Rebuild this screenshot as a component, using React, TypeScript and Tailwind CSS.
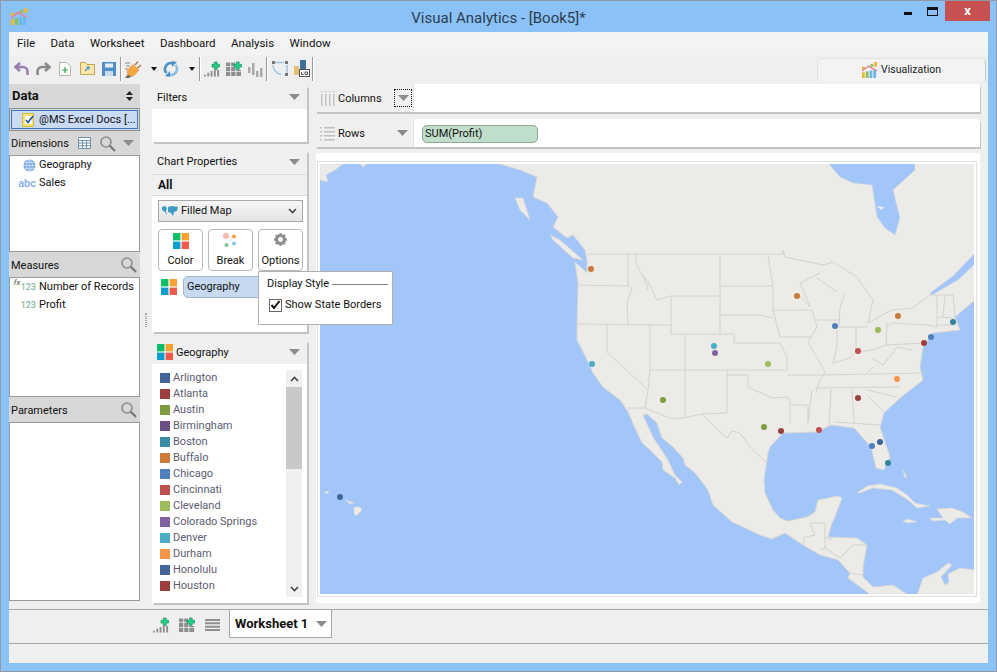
import type { ReactNode } from 'react';

const FONT = "font-['Roboto','Noto_Sans',sans-serif]";

const MENU_ITEMS = ['File', 'Data', 'Worksheet', 'Dashboard', 'Analysis', 'Window'];

const LEGEND: { name: string; color: string }[] = [
  { name: 'Arlington', color: 'bg-[#3f6599]' },
  { name: 'Atlanta', color: 'bg-[#9c3e3b]' },
  { name: 'Austin', color: 'bg-[#7f9c3f]' },
  { name: 'Birmingham', color: 'bg-[#6a5087]' },
  { name: 'Boston', color: 'bg-[#3a8ea5]' },
  { name: 'Buffalo', color: 'bg-[#cc7a36]' },
  { name: 'Chicago', color: 'bg-[#4f81bd]' },
  { name: 'Cincinnati', color: 'bg-[#c0504d]' },
  { name: 'Cleveland', color: 'bg-[#9bbb59]' },
  { name: 'Colorado Springs', color: 'bg-[#8064a2]' },
  { name: 'Denver', color: 'bg-[#4bacc6]' },
  { name: 'Durham', color: 'bg-[#f79646]' },
  { name: 'Honolulu', color: 'bg-[#3f6599]' },
  { name: 'Houston', color: 'bg-[#9c3e3b]' },
];

const LAND =
  '500,164 520,170 537,177 533,197 547,203 558,217 553,227 567,238 573,235 585,250 587,260 587,273 575,262 578,283 577,323 577,340 587,360 593,373 603,387 620,400 628,412 635,428 642,443 650,450 662,462 663,470 675,478 679,485 682,482 675,475 668,460 653,437 643,415 647,414 657,423 662,438 673,447 683,458 685,465 695,473 708,490 712,502 713,505 732,522 760,535 772,539 785,533 803,545 820,555 838,560 850,573 848,578 867,592 870,595 908,595 893,585 873,587 863,577 863,567 867,545 857,538 828,537 832,523 835,517 842,498 838,496 818,500 815,512 807,517 788,521 780,518 773,510 765,493 764,480 768,453 770,447 783,433 817,432 831,425 854,428 871,447 876,468 884,470 890,457 880,427 884,413 900,398 923,380 920,367 923,347 933,333 960,330 955,317 975,300 975,163 500,163';

const ISLANDS = [
  '917,595 923,578 937,572 948,563 952,565 941,577 945,585 949,582 948,574 960,568 975,570 975,595',
  '857,493 867,486 880,484 897,488 907,495 915,503 930,506 917,508 908,500 892,490 873,488 860,493',
  '930,518 943,518 937,509 952,508 963,512 972,518 957,518 950,524 945,520 932,521',
  '903,521 908,519 917,522 907,523',
  '354,507 360,507 362,510 356,516 354,513',
  '345,500 354,503 350,504',
  '324,492 329,491 327,494',
  '550,235 560,240 583,260 573,258 553,240',
  '515,198 523,198 530,220 520,210',
  '320,164 343,164 335,170 326,175 328,182 320,180',
  '903,470 907,477 905,478',
  '360,164 367,164 363,167',
];

const BORDERS = [
  '587,254 783,254 783,250 785,257 823,265 833,262 857,277 873,300 868,323 892,310 913,308 930,295 953,295 955,317',
  '578,285 630,286',
  '628,254 628,287',
  '632,287 627,303 628,324',
  '577,324 671,325',
  '607,325 607,352 648,390 645,408',
  '627,408 645,408 672,419 683,418 702,414 715,427 727,438 732,431 740,433 750,447 766,462',
  '636,254 636,264 645,280 648,290',
  '640,272 647,280 657,300 670,296 720,296',
  '671,296 671,334 734,334 734,343 780,343 787,357 787,370 650,370 650,325',
  '720,255 720,334',
  '720,286 772,286',
  '720,315 760,315 773,318',
  '768,255 773,287 773,310 780,337 812,337',
  '685,334 685,418',
  '727,370 727,413 702,414',
  '727,375 748,375 748,387 772,398 788,397 790,402 790,423',
  '648,390 650,370',
  '787,375 820,375 925,373',
  '790,405 808,405 808,423',
  '812,390 808,423',
  '831,390 829,425',
  '852,390 854,423',
  '835,422 880,425',
  '867,395 884,412',
  '867,390 897,397',
  '815,388 900,387',
  '773,310 812,310 817,327 808,342 820,363 825,372 820,380 816,393',
  '797,293 810,307 800,283 820,273',
  '817,320 840,320',
  '817,278 837,292',
  '845,293 840,307 839,327',
  '837,327 868,327',
  '837,327 837,347 833,363 850,358 856,352 872,350 886,345',
  '856,328 856,352',
  '887,322 886,345',
  '873,367 867,373',
  '872,358 883,365 897,347 912,350',
  '886,345 925,343',
  '887,327 892,323 928,325 937,327 937,295',
  '945,295 943,317',
  '937,317 955,318',
  '937,325 955,325',
  '810,523 825,523 825,537 832,540',
  '810,523 815,535 805,537 803,545',
  '825,537 825,548 820,550',
  '825,548 840,558 853,545 867,545',
  '850,573 863,575',
];

const DOTS = [
  { x: 591, y: 269, c: 'fill-[#cc7a36]' },
  { x: 592, y: 364, c: 'fill-[#4bacc6]' },
  { x: 714, y: 346, c: 'fill-[#4bacc6]' },
  { x: 715, y: 353, c: 'fill-[#8064a2]' },
  { x: 768, y: 364, c: 'fill-[#9bbb59]' },
  { x: 797, y: 296, c: 'fill-[#cc7a36]' },
  { x: 835, y: 326, c: 'fill-[#4f81bd]' },
  { x: 878, y: 330, c: 'fill-[#9bbb59]' },
  { x: 898, y: 316, c: 'fill-[#cc7a36]' },
  { x: 858, y: 351, c: 'fill-[#c0504d]' },
  { x: 953, y: 322, c: 'fill-[#31859c]' },
  { x: 931, y: 337, c: 'fill-[#4f81bd]' },
  { x: 924, y: 343, c: 'fill-[#9c3e3b]' },
  { x: 897, y: 379, c: 'fill-[#f79646]' },
  { x: 858, y: 398, c: 'fill-[#9c3e3b]' },
  { x: 663, y: 400, c: 'fill-[#7f9c3f]' },
  { x: 764, y: 427, c: 'fill-[#7f9c3f]' },
  { x: 781, y: 431, c: 'fill-[#9c3e3b]' },
  { x: 819, y: 430, c: 'fill-[#c0504d]' },
  { x: 872, y: 446, c: 'fill-[#4f81bd]' },
  { x: 880, y: 442, c: 'fill-[#3f6599]' },
  { x: 888, y: 463, c: 'fill-[#31859c]' },
  { x: 340, y: 497, c: 'fill-[#3f6599]' },
];

const Caret = () => (
  <svg width="11" height="6" viewBox="0 0 11 6" className="shrink-0">
    <path d="M0 0h11L5.500 6z" fill="#8c8c8c" />
  </svg>
);

const DarkCaret = ({ className }: { className: string }) => (
  <svg width="6" height="4" viewBox="0 0 6 4" className={`${className} shrink-0`}>
    <path d="M0 0h6L3 4z" fill="#111" />
  </svg>
);

const Search = () => (
  <svg width="17" height="17" viewBox="0 0 17 17" className="shrink-0">
    <circle cx="7" cy="7" r="5" fill="none" stroke="#8e8e8e" strokeWidth="1.600" />
    <path d="M10.800 10.800 16 16" stroke="#777" strokeWidth="2.200" />
  </svg>
);

const Colors = ({ size = 16 }: { size?: number }) => (
  <svg width={size} height={size} viewBox="0 0 16 16" className="shrink-0">
    <rect width="7.400" height="7.400" fill="#0bbf6a" />
    <rect x="8.600" width="7.400" height="7.400" fill="#f9a22f" />
    <rect y="8.600" width="7.400" height="7.400" fill="#089fd0" />
    <rect x="8.600" y="8.600" width="7.400" height="7.400" fill="#f05a4d" />
  </svg>
);

const Logo = ({ size = 17 }: { size?: number }) => (
  <svg width={size} height={size} viewBox="0 0 17 17" className="shrink-0">
    <rect x="0" y="11" width="3" height="6" fill="#f2b632" />
    <rect x="4" y="10" width="3" height="7" fill="#8cc152" />
    <rect x="8" y="9" width="3" height="8" fill="#6ab8e8" />
    <rect x="12" y="8" width="3" height="9" fill="#6ab8e8" />
    <rect x="13" y="0" width="3" height="5" fill="#f2b632" />
    <rect x="9" y="2" width="3" height="3" fill="#8cc152" />
    <rect x="0" y="5" width="3" height="3" fill="#f2b632" />
    <path d="M0 9.500l7-5 9 5" fill="none" stroke="#e3869a" strokeWidth="1.600" />
  </svg>
);

const GreenPlus = () => (
  <path d="M8.500 3h2.500V.5h3V3H16.500v3H14v2.500h-3V6H8.500z" fill="#1fd184" stroke="#0b7d4e" strokeWidth=".6" />
);

const AddBars = () => (
  <svg width="16" height="16" viewBox="0 0 17 16" className="shrink-0">
    <path d="M0 14h2v2H0zM3.500 12h2v4h-2zM7 10h2v6H7zM10.500 9h2v7h-2zM14 9h2v7h-2z" fill="#8f8f8f" />
    <GreenPlus />
  </svg>
);

const AddGrid = () => (
  <svg width="16" height="16" viewBox="0 0 17 16" className="shrink-0">
    <path d="M0 1h4.500v4H0zM5.500 1h4v4h-4zM0 6h4.500v4H0zM5.500 6h4.500v4h-4.500zM11 9h5v1h-5zM0 11h4.500v4.500H0zM5.500 11h4.500v4.500h-4.500zM11 11h5v4.500h-5z" fill="#8f8f8f" />
    <GreenPlus />
  </svg>
);

const Bars = () => (
  <svg width="15" height="16" viewBox="0 0 15 16" className="shrink-0">
    <path d="M0 6h2.500v6H0zM4 2h2.500v12H4zM8 10h2.500v6H8zM12 7h2.500v9H12z" fill="#a9a9a9" />
  </svg>
);

const ToolSep = ({ className }: { className: string }) => (
  <div className={`${className} w-px h-[24px] bg-[#9a9a9a] border-r border-white box-content shrink-0`} />
);

const Toolbar = () => (
  <div className="flex items-center h-[27px] pl-[5px] bg-[#efefef]">
    <svg width="15" height="14" viewBox="0 0 15 14" className="shrink-0">
      <path d="M6 1 1.500 5 6 9M2 5h7a4.500 4.500 0 0 1 4.500 4.500V13" fill="none" stroke="#9a7fb5" strokeWidth="2.600" />
    </svg>
    <svg width="15" height="14" viewBox="0 0 15 14" className="ml-[7px] shrink-0">
      <path d="M9 1l4.500 4L9 9M13 5H6a4.500 4.500 0 0 0-4.500 4.500V13" fill="none" stroke="#8a8a8a" strokeWidth="2.600" />
    </svg>
    <svg width="12" height="14" viewBox="0 0 12 14" className="ml-[8px] shrink-0">
      <path d="M.5.500h7l4 4v9H.5z" fill="#fff" stroke="#b5b5a5" />
      <path d="M6 5v6M3 8h6" stroke="#2f9e44" strokeWidth="1.200" />
    </svg>
    <svg width="15" height="13" viewBox="0 0 15 13" className="ml-[9px] shrink-0">
      <path d="M.5 12.500V.5h5l1.500 2h7.500v10z" fill="#fbe6ac" stroke="#c9a34f" />
      <path d="M5 9l4-4M6.500 5H9v2.500" fill="none" stroke="#3a8fd0" strokeWidth="1.100" />
    </svg>
    <svg width="14" height="14" viewBox="0 0 14 14" className="ml-[7px] shrink-0">
      <path d="M0 0h14v14H0z" fill="#4f8fc8" />
      <path d="M3 1.500h8v4H3z" fill="#e8eef5" />
      <path d="M3 9h8v5H3z" fill="#cfdbe8" />
    </svg>
    <ToolSep className="ml-[4px]" />
    <svg width="16" height="18" viewBox="0 0 16 18" className="ml-[3px] shrink-0">
      <path d="M0 3h5M1 6h4M0 9h3" stroke="#8a8a8a" strokeWidth="1" />
      <path d="M0 18l4-5 3 3-3 2z" fill="#666" />
      <path d="M3.500 9 8 4.500l6 5.500L9.500 15a4 4 0 0 1-6-6z" fill="#f5a63c" stroke="#d9892a" strokeWidth=".5" />
      <path d="M10 5l3-3.500M12.500 8 16 5" stroke="#a87a3a" strokeWidth="1.400" />
    </svg>
    <DarkCaret className="ml-[10px]" />
    <svg width="16" height="16" viewBox="0 0 16 16" className="ml-[6px] shrink-0">
      <path d="M10 2.400A6 6 0 0 0 3.500 12" fill="none" stroke="#4c92c8" strokeWidth="2.600" />
      <path d="M6 13.600A6 6 0 0 0 12.500 4" fill="none" stroke="#8fbde0" strokeWidth="2.600" />
      <path d="M9 0v6l5-5zM7 16v-6l-5 5z" fill="#4c92c8" />
    </svg>
    <DarkCaret className="ml-[10px]" />
    <ToolSep className="ml-[4px]" />
    <div className="ml-[3px]"><AddBars /></div>
    <div className="ml-[6px]"><AddGrid /></div>
    <div className="ml-[6px]"><Bars /></div>
    <ToolSep className="ml-[3px]" />
    <svg width="16" height="15" viewBox="0 0 16 15" className="ml-[4px] shrink-0">
      <path d="M3 1.500h9M15 4v8M1 4c0 5 3 8 8 9.500" fill="none" stroke="#9cc4e4" strokeWidth="1.400" />
      <path d="M0 0h3v3H0zM13 0h3v3h-3zM13 12h3v3h-3z" fill="#777" />
    </svg>
    <svg width="16" height="17" viewBox="0 0 16 17" className="ml-[6px] shrink-0">
      <rect y="6" width="5" height="9" fill="#e8bf70" />
      <rect x="6" width="6" height="9" fill="#3f6f9f" />
      <rect x="5.500" y="9.500" width="10" height="7" fill="#fff" stroke="#555" />
      <path d="M7.500 12v2.500h2M11 12h2.500v2.500H11z" fill="none" stroke="#555" />
    </svg>
    <ToolSep className="ml-[2px]" />
    <div className="ml-auto mr-[2px] self-end w-[169px] h-[23px] mb-[1px] bg-[#f3f3f3] border border-b-0 border-[#e2e2e2] border-r-[#c8c8c8] rounded-t-[5px] flex items-center justify-center gap-[3px] text-[10.500px] text-[#222]">
      <Logo size={16} />
      Visualization
    </div>
  </div>
);

const SideHeader = ({ label, height = 'h-[25px]', pad = 'pt-[3px]', children }: { label: string; height?: string; pad?: string; children?: ReactNode }) => (
  <div className={`${height} shrink-0 bg-[#d7d7d7] flex items-center pl-[2px] pr-[3px] text-[11px] text-[#111]`}>
    <span className={`flex-1 ${pad}`}>{label}</span>
    {children}
  </div>
);

const FieldRow = ({ icon, label }: { icon: ReactNode; label: string }) => (
  <div className="h-[18px] flex items-center text-[11px] text-[#111] whitespace-nowrap">
    <div className="w-[29px] flex justify-end pr-[3px] shrink-0">{icon}</div>
    {label}
  </div>
);

const DataPanel = () => (
  <div className="w-[131px] shrink-0 flex flex-col mt-[2px] mb-[6px]">
    <div className="h-[24px] shrink-0 bg-[#d7d7d7] flex items-center pl-[3px] pr-[7px] font-bold text-[13px] text-[#111]">
      <span className="flex-1">Data</span>
      <svg width="7" height="10" viewBox="0 0 7 10">
        <path d="M3.500 0 7 4H0zM0 6h7l-3.500 4z" fill="#222" />
      </svg>
    </div>
    <div className="h-[23px] shrink-0 border border-[#8f8f8f] p-[1px] bg-[#d7d7d7]">
      <div className="h-full border border-[#3f76c4] bg-[#c9daf3] flex items-center pl-[10px] gap-[4px] text-[11px] text-[#111] whitespace-nowrap overflow-hidden">
        <svg width="13" height="14" viewBox="0 0 13 14" className="shrink-0">
          <rect x=".5" y=".5" width="11" height="13" fill="#f6e27a" stroke="#d8b93c" />
          <rect x="3" y="3" width="7" height="8" fill="#fff" />
          <path d="M4 7l2 2.500L11 3" fill="none" stroke="#1f4fa0" strokeWidth="1.600" />
        </svg>
        <span className="pt-[1px]">@MS Excel Docs [...</span>
      </div>
    </div>
    <SideHeader label="Dimensions" height="h-[24px]" pad="pt-[2px]">
      <svg width="13" height="12" viewBox="0 0 13 12" className="mr-[8px]">
        <path d="M.5.500h12v11H.5zM.5 3.500h12M.5 6h12M.5 8.700h12M4.500 3.500v8M8.500 3.500v8" fill="#fff" stroke="#6f8fa8" />
      </svg>
      <Search />
      <div className="ml-[7px] mr-[3px]"><Caret /></div>
    </SideHeader>
    <div className="h-[97px] shrink-0 bg-white border border-[#9a9a9a] flex flex-col">
      <FieldRow
        label="Geography"
        icon={
          <svg width="13" height="13" viewBox="0 0 13 13">
            <circle cx="6.500" cy="6.500" r="6" fill="#7ea9e8" />
            <path d="M.5 6.500h12M1.500 3.500h10M1.500 9.500h10M6.500.5v12M6.500.5c-4 3-4 9 0 12M6.500.5c4 3 4 9 0 12" fill="none" stroke="#d5e4fa" strokeWidth=".7" />
          </svg>
        }
      />
      <FieldRow label="Sales" icon={<span className="text-[11px] font-medium text-[#7ea9e8] leading-none">abc</span>} />
    </div>
    <SideHeader label="Measures">
      <Search />
    </SideHeader>
    <div className="h-[120px] shrink-0 bg-white border border-[#9a9a9a] flex flex-col">
      <FieldRow
        label="Number of Records"
        icon={
          <span className="relative text-[9px] font-medium text-[#86b89c] leading-none">
            <span className="absolute -left-[7px] -top-[4px] italic text-[8px] text-[#777]">fx</span>123
          </span>
        }
      />
      <FieldRow label="Profit" icon={<span className="text-[9px] font-medium text-[#86b89c] leading-none">123</span>} />
    </div>
    <SideHeader label="Parameters">
      <Search />
    </SideHeader>
    <div className="flex-1 bg-white border border-[#9a9a9a]" />
  </div>
);

const Panel = ({ title, icon, pad = 'pt-[2px]', className, children }: { title: string; icon?: ReactNode; pad?: string; className: string; children: ReactNode }) => (
  <div className={`${className} shrink-0 flex flex-col bg-white rounded-t-[3px] shadow-[2px_2px_0_#c4c4c4]`}>
    <div className="h-[24px] shrink-0 bg-[#f0f0f0] flex items-center pl-[5px] pr-[7px] gap-[3px] text-[11px] text-[#111]">
      {icon}
      <span className={`flex-1 ${pad}`}>{title}</span>
      <Caret />
    </div>
    {children}
  </div>
);

const ChartButton = ({ icon, label }: { icon: ReactNode; label: string }) => (
  <div className="w-[45px] h-[42px] bg-white border border-[#b8b8b8] rounded-[4px] flex flex-col items-center justify-between pt-[3px] pb-[2px] text-[11px] text-[#111]">
    {icon}
    <span className="leading-[14px]">{label}</span>
  </div>
);

const ChartProperties = () => (
  <Panel title="Chart Properties" pad="pt-[1px]" className="h-[182px]">
    <div className="h-[22px] shrink-0 bg-[#f0f0f0] border-y border-[#dcdcdc] pl-[6px] flex items-center font-bold text-[12px] text-[#111]">All</div>
    <div className="ml-[6px] mr-[4px] mt-[4px] h-[22px] shrink-0 border border-[#a8a8a8] bg-gradient-to-b from-[#f6f6f6] to-[#e4e4e4] flex items-center pl-[3px] pr-[5px] gap-[3px] text-[11px] text-[#111]">
      <svg width="16" height="11" viewBox="0 0 16 11" className="shrink-0">
        <path d="M0 1l3-1 2 2-1 3 1 4-2-3-3-2zM6 1l4-1 6 1-1 4-3 1-1 4-2-3-3-1z" fill="#3d9bc6" />
      </svg>
      <span className="flex-1 pt-[1px]">Filled Map</span>
      <svg width="9" height="6" viewBox="0 0 9 6">
        <path d="M1 1l3.500 3.500L8 1" fill="none" stroke="#444" strokeWidth="1.600" />
      </svg>
    </div>
    <div className="relative ml-[6px] mr-[4px] mt-[7px] flex justify-between">
      <ChartButton label="Color" icon={<Colors />} />
      <ChartButton
        label="Break"
        icon={
          <svg width="15" height="15" viewBox="0 0 15 15">
            <circle cx="3" cy="3" r="3" fill="#f6b8b0" />
            <circle cx="11" cy="3.500" r="2" fill="#f59a3c" />
            <circle cx="3.500" cy="12" r="2" fill="#7cc08a" />
            <circle cx="11" cy="10.500" r="2" fill="#8cc8f0" />
            <path d="M6.500 4h2M7 8l1-2" stroke="#bbb" strokeWidth=".8" />
          </svg>
        }
      />
      <ChartButton
        label="Options"
        icon={
          <svg width="13" height="13" viewBox="0 0 13 13">
            <circle cx="6.500" cy="6.500" r="4.200" fill="none" stroke="#8c8c8c" strokeWidth="2.600" />
            <path d="M6.500 0v13M0 6.500h13M1.900 1.900l9.200 9.200M11.100 1.900l-9.200 9.200" stroke="#8c8c8c" strokeWidth="1.800" />
            <circle cx="6.500" cy="6.500" r="2.400" fill="#fff" />
          </svg>
        }
      />
      <div className="absolute left-[100px] top-[42px] z-10 w-[135px] h-[54px] bg-white border border-[#b0b0b0] pl-[8px] pt-[3px] text-[11px] text-[#111]">
        <div className="flex items-center gap-[3px] h-[18px] pr-[4px]">
          <span className="pt-[1px]">Display Style</span>
          <div className="flex-1 h-px bg-[#808080]" />
        </div>
        <div className="flex items-center gap-[3px] mt-[4px] ml-[2px] h-[16px]">
          <div className="w-[13px] h-[13px] border border-[#666] flex items-center justify-center shrink-0">
            <svg width="11" height="10" viewBox="0 0 11 10">
              <path d="M1.500 5l2.500 3L9.500 1" fill="none" stroke="#111" strokeWidth="2" />
            </svg>
          </div>
          Show State Borders
        </div>
      </div>
    </div>
    <div className="flex items-center mt-[5px] pl-[9px] gap-[6px]">
      <Colors />
      <div className="w-[100px] h-[22px] bg-[#c6d9f1] border border-[#9fb6d3] rounded-l-[5px] flex items-center pl-[3px] pt-[1px] text-[11px] text-[#111]">Geography</div>
    </div>
  </Panel>
);

const Legend = () => (
  <Panel title="Geography" icon={<Colors />} className="flex-1 min-h-0">
    <div className="flex flex-1 min-h-0 pl-[8px] pr-[5px] pt-[6px] pb-[6px]">
      <div className="flex-1 flex flex-col">
        {LEGEND.map((item) => (
          <div key={item.name} className="h-[16px] flex items-center gap-[3px] text-[11px] text-[#5b5b70]">
            <div className={`w-[10px] h-[10px] ${item.color}`} />
            <span className="pt-[1px]">{item.name}</span>
          </div>
        ))}
      </div>
      <div className="w-[16px] bg-[#f0f0f0] flex flex-col items-center">
        <div className="h-[17px] flex items-center justify-center">
          <svg width="9" height="6" viewBox="0 0 9 6"><path d="M1 5l3.500-3.500L8 5" fill="none" stroke="#444" strokeWidth="1.600" /></svg>
        </div>
        <div className="w-full h-[82px] bg-[#c8c8c8]" />
        <div className="flex-1" />
        <div className="h-[16px] flex items-center justify-center">
          <svg width="9" height="6" viewBox="0 0 9 6"><path d="M1 1l3.500 3.500L8 1" fill="none" stroke="#444" strokeWidth="1.600" /></svg>
        </div>
      </div>
    </div>
  </Panel>
);

const ShelfGrip = ({ columns }: { columns: boolean }) => (
  <svg width="16" height="15" viewBox="0 0 16 15" className="shrink-0">
    {columns ? (
      <path d="M1 0h1.500v1.500H1zM5 0h1.500v1.500H5zM9 0h1.500v1.500H9zM13 0h1.500v1.500H13zM1 3h1.500v12H1zM5 3h1.500v12H5zM9 3h1.500v12H9zM13 3h1.500v12H13z" fill="#c4c4c4" />
    ) : (
      <path d="M0 1h2v1.500H0zM0 5h2v1.500H0zM0 9h2v1.500H0zM0 13h2v1.500H0zM4 1h11v1.500H4zM4 5h11v1.500H4zM4 9h11v1.500H4zM4 13h11v1.500H4z" fill="#c0c0c0" />
    )}
  </svg>
);

const Shelf = ({ label, columns = false, children }: { label: string; columns?: boolean; children?: ReactNode }) => (
  <div className="h-[28px] shrink-0 flex bg-white rounded-t-[3px] shadow-[1px_2px_0_#c4c4c4]">
    <div className="w-[98px] shrink-0 bg-[#f0f0f0] flex items-center pl-[4px] gap-[2px] text-[11px] text-[#111] border-r border-[#e4e4d8]">
      <ShelfGrip columns={columns} />
      <span className="flex-1 pt-[3px]">{label}</span>
      {columns ? (
        <div className="w-[18px] h-[18px] mr-[1px] border border-dotted border-[#111] flex items-center justify-center">
          <Caret />
        </div>
      ) : (
        <div className="mr-[5px]"><Caret /></div>
      )}
    </div>
    {children}
  </div>
);

const MapCanvas = () => (
  <svg viewBox="320 164 654 430" className="block w-full h-full bg-[#a3c6fa]">
    <polygon points={LAND} fill="#ecebe7" stroke="#d6d6d4" strokeWidth="1" />
    {ISLANDS.map((points) => (
      <polygon key={points} points={points} fill="#ecebe7" stroke="#d6d6d4" strokeWidth=".7" />
    ))}
    <polygon points="828,163 840,177 853,183 872,185 877,217 885,228 895,235 900,218 893,190 915,170 915,163" fill="#a3c6fa" stroke="#d6d6d4" strokeWidth=".6" />
    <polygon points="930,293 953,276 975,253 975,264 958,280 932,295" fill="#a3c6fa" stroke="#d6d6d4" strokeWidth=".6" />
    <polygon points="876,206 884,207 882,210" fill="#ecebe7" />
    {BORDERS.map((points) => (
      <polyline key={points} points={points} fill="none" stroke="#d2d2d0" strokeWidth="1" />
    ))}
    {DOTS.map((dot) => (
      <circle key={`${dot.x}-${dot.y}`} cx={dot.x} cy={dot.y} r="3" className={dot.c} />
    ))}
  </svg>
);

const BottomTabs = () => (
  <div className="h-[34px] shrink-0 flex border-t border-[#a8a8a8] bg-[#efefef] mt-[2px]">
    <div className="w-[220px] shrink-0 flex items-center pl-[144px] gap-[10px] pb-[3px]">
      <AddBars />
      <AddGrid />
      <svg width="15" height="12" viewBox="0 0 15 12" className="shrink-0">
        <path d="M0 0h15v2H0zM0 3.300h15v2H0zM0 6.700h15v2H0zM0 10h15v2H0z" fill="#8f8f8f" />
      </svg>
    </div>
    <div className="w-[103px] h-[28px] bg-white border border-t-0 border-[#a8a8a8] flex items-center pl-[5px] pr-[4px] font-bold text-[13px] text-[#111]">
      <span className="flex-1">Worksheet 1</span>
      <Caret />
    </div>
  </div>
);

export default function App() {
  return (
    <div className={`${FONT} w-[997px] h-[672px] flex flex-col bg-[#8ac2f8] border border-[#8d9aa8] overflow-hidden`}>
      <div className="h-[31px] shrink-0 flex pl-[10px] pr-[6px] text-[#2c3d4f]">
        <div className="pt-[7px]"><Logo /></div>
        <div className="flex-1 text-center text-[15px] pt-[6px] pl-[72px]">Visual Analytics - [Book5]*</div>
        <div className="flex h-[20px]">
          <div className="w-[22px] flex justify-center pt-[11px]"><div className="w-[8px] h-[3px] bg-[#111]" /></div>
          <div className="w-[26px] flex justify-center pt-[6px]"><div className="w-[11px] h-[9px] border border-t-[3px] border-[#111]" /></div>
          <div className="w-[45px] bg-[#c75050] text-white flex items-center justify-center text-[13px] font-bold">x</div>
        </div>
      </div>
      <div className="mx-[8px] h-[631px] shrink-0 flex flex-col bg-[#efefef]">
        <div className="h-[23px] shrink-0 bg-[#f3f3f3] flex items-center pl-[8px] gap-[15.500px] text-[11.500px] text-[#111]">
          {MENU_ITEMS.map((item) => (
            <span key={item}>{item}</span>
          ))}
        </div>
        <Toolbar />
        <div className="flex-1 min-h-0 flex">
          <DataPanel />
          <div className="w-[12px] shrink-0 flex items-center justify-center">
            <div className="w-[2px] h-[14px] mb-[50px] border-x border-dotted border-[#aaa]" />
          </div>
          <div className="w-[155px] shrink-0 flex flex-col gap-[8px] pt-[3px] pb-[4px]">
            <Panel title="Filters" className="h-[57px]"><div /></Panel>
            <ChartProperties />
            <Legend />
          </div>
          <div className="flex-1 min-w-0 flex flex-col gap-[7px] pl-[9px] pr-[8px] pt-[2px] pb-[4px]">
            <Shelf label="Columns" columns />
            <Shelf label="Rows">
              <div className="ml-[8px] mt-[6px] w-[116px] h-[18px] bg-[#bfdecb] border border-[#8fa898] rounded-[5px] flex items-center pl-[2px] pt-[1px] text-[11px] text-[#111]">SUM(Profit)</div>
            </Shelf>
            <div className="flex-1 min-h-0 bg-white pt-[8px] pb-[6px] pl-[1px] pr-[3px] -mt-[1px]">
              <div className="h-full border border-[#e0e0e0] p-[2px]">
                <MapCanvas />
              </div>
            </div>
          </div>
        </div>
        <BottomTabs />
        <div className="h-[20px] shrink-0 bg-[#f0f0f0] border-t border-[#a8a8a8]" />
      </div>
    </div>
  );
}
